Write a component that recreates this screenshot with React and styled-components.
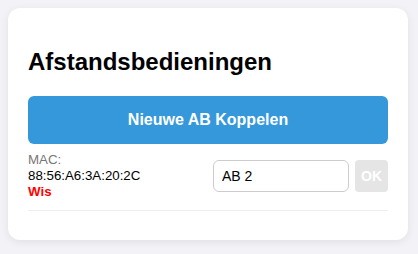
import styled, { createGlobalStyle } from "styled-components";
import { useState } from "react";

const GlobalStyle = createGlobalStyle`
    body {
        margin: 0;
        padding: 8px;
        background: #f2f2f7;
        font-family: "Liberation Sans", Arial, sans-serif;
    }
`;

const Card = styled.div`
    box-sizing: border-box;
    max-width: 400px;
    background: #fff;
    border-radius: 12px;
    padding: 20px 20px 29px;
    box-shadow: 0 2px 8px rgba(0, 0, 0, 0.08);
`;

const Title = styled.h2`
    font-size: 24px;
    font-weight: bold;
    margin: 20px 0;
    color: #000;
`;

const PairButton = styled.button`
    display: block;
    width: 100%;
    height: 48px;
    border: none;
    border-radius: 6px;
    background: #3498db;
    color: #fff;
    font-family: inherit;
    font-size: 16px;
    font-weight: bold;
    cursor: pointer;
`;

const RemoteRow = styled.div`
    display: flex;
    align-items: center;
    justify-content: space-between;
    padding: 8px 0 10px;
    border-bottom: 1px solid #eee;
`;

const Info = styled.div`
    font-size: 13.3px;
    line-height: 16px;
`;

const Label = styled.div`
    color: #777;
`;

const Mac = styled.div`
    color: #000;
`;

const DeleteLink = styled.div`
    color: #ff0000;
    font-weight: bold;
    cursor: pointer;
`;

const NameForm = styled.div`
    display: flex;
    align-items: center;
    gap: 6px;
`;

const NameInput = styled.input`
    box-sizing: border-box;
    width: 136px;
    height: 32px;
    padding: 0 8px;
    border: 1px solid #ccc;
    border-radius: 6px;
    font-family: inherit;
    font-size: 14px;
    color: #000;
    outline: none;
`;

const OkButton = styled.button`
    width: 33px;
    height: 32px;
    padding: 0;
    border: none;
    border-radius: 4px;
    background: ${p => (p.disabled ? "#e5e5e5" : "#3498db")};
    color: #fff;
    font-family: inherit;
    font-size: 14px;
    font-weight: bold;
`;

const remotes = [{ mac: "88:56:A6:3A:20:2C", name: "AB 2" }];

const App = () => {
    const [names, setNames] = useState(remotes.map(r => r.name));

    return (
        <>
            <GlobalStyle />
            <Card>
                <Title>Afstandsbedieningen</Title>
                <PairButton>Nieuwe AB Koppelen</PairButton>
                {remotes.map((remote, i) => (
                    <RemoteRow key={remote.mac}>
                        <Info>
                            <Label>MAC:</Label>
                            <Mac>{remote.mac}</Mac>
                            <DeleteLink>Wis</DeleteLink>
                        </Info>
                        <NameForm>
                            <NameInput
                                value={names[i]}
                                onChange={e => {
                                    const next = [...names];
                                    next[i] = e.target.value;
                                    setNames(next);
                                }}
                            />
                            <OkButton disabled={names[i] === remote.name}>OK</OkButton>
                        </NameForm>
                    </RemoteRow>
                ))}
            </Card>
        </>
    );
};

export default App;
